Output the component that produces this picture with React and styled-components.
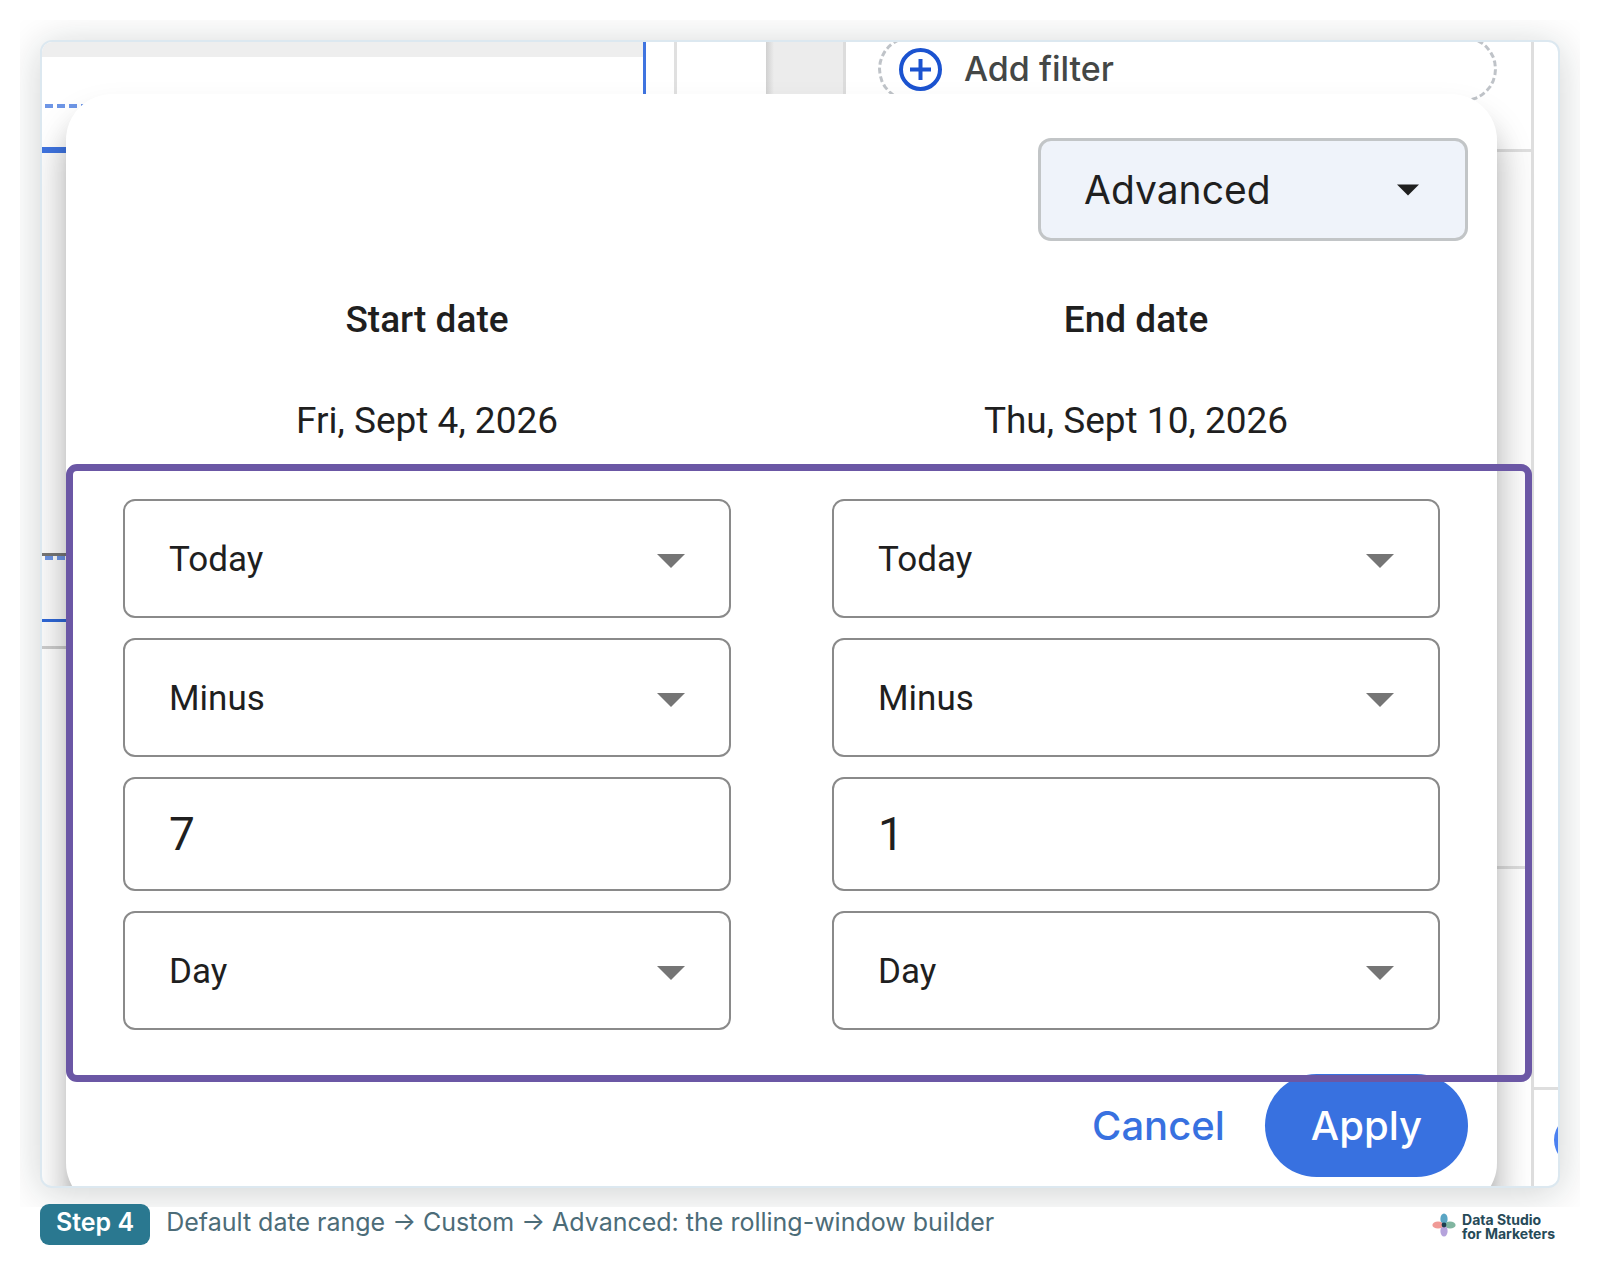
import React from 'react';
import styled, { createGlobalStyle, css } from 'styled-components';

const color = {
  ink: '#1f1f1f',
  blue: '#3871e0',
  line: '#dedede',
  field: '#8a8a8a',
  highlight: '#6b57a5',
  teal: '#2a7890',
  caption: '#4c6c78',
  brand: '#264a58',
};

const font = {
  ui: "Roboto, 'Liberation Sans', sans-serif",
  display: "Inter, Roboto, 'Liberation Sans', sans-serif",
};

const GlobalStyle = createGlobalStyle`
  *, *::before, *::after {
    box-sizing: border-box;
  }

  body {
    margin: 0;
    background: #fff;
    color: ${color.ink};
    font-family: ${font.ui};
  }

  button, input, select {
    font: inherit;
    color: inherit;
    margin: 0;
  }
`;

const Page = styled.main`
  padding: 20px 20px 16px;
`;

const Stage = styled.div`
  padding: 20px 20px 19px;
  overflow: hidden;
`;

const Card = styled.section`
  display: grid;
  border: 2px solid #dce8f0;
  border-radius: 12px;
  overflow: hidden;
  background: #fff;
  box-shadow: 0 5px 40px rgba(16, 32, 28, 0.2);

  > * {
    grid-area: 1 / 1;
    min-width: 0;
  }
`;

/* The report editor that shows around the dialog */

const Backdrop = styled.div`
  display: flex;
  overflow: hidden;
`;

const Canvas = styled.div`
  flex: 0 0 604px;
  border-right: 3px solid #3f74e0;
`;

const CanvasHeader = styled.div`
  height: 15px;
  background: #eee;
`;

const Block = styled.div`
  height: ${props => props.$height}px;
  ${props =>
    props.$rule &&
    css`
      border-bottom: ${props.$weight || 3}px solid ${props.$rule};
    `};
  ${props =>
    props.$muted &&
    css`
      background: #fcfcfc;
    `};
`;

const Dashes = styled.div`
  height: 4px;
  margin-left: 3px;
  background: repeating-linear-gradient(90deg, #6e96e6 0 8px, transparent 8px 12px);
`;

const Gutter = styled.div`
  flex: 0 0 31px;
  border-right: 3px solid #e0e0e0;
`;

const Blank = styled.div`
  flex: 0 0 89px;
`;

const Scrollbar = styled.div`
  flex: 0 0 80px;
  border-right: 3px solid #dcdcdc;
  background: linear-gradient(90deg, #d0d0d0, #ececec 8px);
`;

const Properties = styled.div`
  flex: 1;
  border-right: 3px solid ${color.line};
`;

const FilterSlot = styled.div`
  height: 116px;
  padding: 0 34px 0 32px;
  border-bottom: 3px solid ${color.line};
`;

const AddFilter = styled.button`
  display: flex;
  align-items: center;
  gap: 22px;
  width: 100%;
  height: 66px;
  margin-top: -6px;
  padding: 0 18px;
  border: 3px dashed #bfc3c8;
  border-radius: 33px;
  background: none;
  color: #444746;
  font-family: ${font.display};
  font-size: 34px;
  font-weight: 500;
  line-height: 40px;

  svg {
    width: 43px;
    height: 43px;
  }
`;

const DataPanel = styled.div`
  flex: 0 0 24px;
  overflow: hidden;
`;

const Bubble = styled.div`
  width: 52px;
  height: 52px;
  margin: 24px 0 0 20px;
  border-radius: 50%;
  background: #4a80f0;
`;

/* Dialog */

const Dialog = styled.form`
  display: flex;
  flex-direction: column;
  margin: 52px 61px -23px 24px;
  padding: 44px 29px 32px;
  border-radius: 46px;
  background: #fff;
  box-shadow: 0 20px 14px -8px rgba(0, 0, 0, 0.16), 0 28px 28px 3px rgba(0, 0, 0, 0.14),
    0 26px 36px 6px rgba(0, 0, 0, 0.12);
`;

const Picker = styled.label`
  display: grid;
  align-items: center;

  > * {
    grid-area: 1 / 1;
  }

  svg {
    justify-self: end;
    pointer-events: none;
  }
`;

const ModePicker = styled(Picker)`
  align-self: flex-end;
  width: 430px;

  svg {
    width: 22px;
    height: 12px;
    margin-right: 49px;
    fill: ${color.ink};
  }
`;

const ModeSelect = styled.select`
  appearance: none;
  width: 100%;
  height: 103px;
  padding: 0 44px 0 43px;
  border: 3px solid #c2c5c7;
  border-radius: 13px;
  background: #eff3fa;
  font-family: ${font.display};
  font-size: 39px;
`;

const Columns = styled.div`
  display: grid;
  grid-template-columns: 1fr 1fr;
  gap: 101px;
  padding: 0 28px;
`;

const Column = styled.section`
  display: flex;
  flex-direction: column;
  gap: 20px;
`;

const Heading = styled.h2`
  margin: 55px 0 0;
  font-size: 37px;
  font-weight: 500;
  line-height: 48px;
  text-align: center;
`;

const Resolved = styled.p`
  margin: 53px 0 19px;
  font-size: 37px;
  line-height: 48px;
  text-align: center;
`;

const FieldPicker = styled(Picker)`
  svg {
    width: 28px;
    height: 14px;
    margin: 4px 46px 0 0;
    fill: #757575;
  }
`;

const fieldStyles = css`
  appearance: none;
  width: 100%;
  padding: 0 44px;
  border: 2px solid ${color.field};
  border-radius: 12px;
  background: #fff;
`;

const FieldSelect = styled.select`
  ${fieldStyles};
  height: 119px;
  padding-top: 2px;
  font-size: 35px;
`;

const FieldNumber = styled.input`
  ${fieldStyles};
  appearance: textfield;
  height: 114px;
  font-size: 46px;

  &::-webkit-inner-spin-button {
    display: none;
  }
`;

/* Marks the rows that the step is about */
const Highlight = styled.div`
  position: absolute;
  top: 0;
  right: -35px;
  bottom: 0;
  left: 0;
  border: 7px solid ${color.highlight};
  border-radius: 11px;
  pointer-events: none;
`;

const Fields = styled.div`
  position: relative;
  margin: 0 -29px;
  padding: 35px 29px 52px;
`;

const Actions = styled.div`
  display: flex;
  justify-content: flex-end;
  margin-top: -8px;
  font-family: ${font.display};
`;

const Button = styled.button`
  height: 103px;
  padding: 0 ${props => (props.$primary ? 46 : 40)}px;
  border: none;
  border-radius: 52px;
  background: ${props => (props.$primary ? color.blue : 'transparent')};
  color: ${props => (props.$primary ? '#fff' : color.blue)};
  font-size: 40px;
  font-weight: 500;
`;

/* Caption */

const Caption = styled.footer`
  display: flex;
  align-items: center;
  gap: 16px;
  margin-top: -3px;
  padding: 0 25px 0 20px;
  position: relative;
  font-family: ${font.display};
`;

const Step = styled.strong`
  padding: 0 16px 4px;
  border-radius: 9px;
  background: ${color.teal};
  color: #fff;
  font-size: 25px;
  font-weight: 600;
  line-height: 37px;
`;

const CaptionText = styled.p`
  flex: 1;
  margin: 0;
  padding-bottom: 4px;
  color: ${color.caption};
  font-size: 25px;
  line-height: 37px;
`;

const Brand = styled.div`
  display: flex;
  align-items: center;
  gap: 6px;
  color: ${color.brand};
  font-size: 14px;
  font-weight: 700;
  line-height: 14px;

  svg {
    width: 24px;
    height: 24px;
  }

  span {
    padding-top: 4px;
  }
`;

const Arrow = () => (
  <svg viewBox="0 0 28 14" aria-hidden="true">
    <path d="M0 0h28L14 14z" />
  </svg>
);

const columns = [
  { title: 'Start date', resolved: 'Fri, Sept 4, 2026', amount: 7 },
  { title: 'End date', resolved: 'Thu, Sept 10, 2026', amount: 1 },
];

function Choice({ label, options }) {
  return (
    <FieldPicker>
      <FieldSelect aria-label={label}>
        {options.map(option => (
          <option key={option}>{option}</option>
        ))}
      </FieldSelect>
      <Arrow />
    </FieldPicker>
  );
}

function Editor() {
  return (
    <Backdrop>
      <Canvas>
        <CanvasHeader />
        <Block $height={47} />
        <Dashes />
        <Block $height={45} $rule="#3f74e0" $weight={6} />
        <Block $height={403} $rule="#777" $muted />
        <Dashes />
        <Block $height={62} $rule="#2f68d8" $muted />
        <Block $height={27} $rule="#cdcdcd" $muted />
      </Canvas>
      <Gutter />
      <Blank />
      <Scrollbar />
      <Properties>
        <FilterSlot>
          <AddFilter type="button">
            <svg viewBox="0 0 43 43" fill="none" stroke="#1b53d0" strokeWidth="4" aria-hidden="true">
              <circle cx="21.5" cy="21.5" r="19.5" />
              <path d="M21.5 11v21M11 21.5h21" />
            </svg>
            Add filter
          </AddFilter>
        </FilterSlot>
        <Block $height={717} $rule={color.line} $muted />
      </Properties>
      <DataPanel>
        <Block $height={1048} $rule={color.line} />
        <Bubble />
      </DataPanel>
    </Backdrop>
  );
}

function DateRangeDialog() {
  return (
    <Dialog onSubmit={event => event.preventDefault()}>
      <ModePicker>
        <ModeSelect aria-label="Date range type">
          <option>Advanced</option>
          <option>Fixed</option>
        </ModeSelect>
        <Arrow />
      </ModePicker>
      <Columns>
        {columns.map(({ title, resolved }) => (
          <div key={title}>
            <Heading>{title}</Heading>
            <Resolved>{resolved}</Resolved>
          </div>
        ))}
      </Columns>
      <Fields>
        <Columns>
          {columns.map(({ title, amount }) => (
            <Column key={title}>
              <Choice label={`${title} anchor`} options={['Today', 'Fixed']} />
              <Choice label={`${title} direction`} options={['Minus', 'Plus']} />
              <FieldNumber type="number" aria-label={`${title} amount`} defaultValue={amount} />
              <Choice label={`${title} unit`} options={['Day', 'Week', 'Month']} />
            </Column>
          ))}
        </Columns>
        <Highlight />
      </Fields>
      <Actions>
        <Button type="button">Cancel</Button>
        <Button type="submit" $primary>
          Apply
        </Button>
      </Actions>
    </Dialog>
  );
}

export default function App() {
  return (
    <>
      <GlobalStyle />
      <Page>
        <Stage>
          <Card>
            <Editor />
            <DateRangeDialog />
          </Card>
        </Stage>
        <Caption>
          <Step>Step 4</Step>
          <CaptionText>Default date range → Custom → Advanced: the rolling-window builder</CaptionText>
          <Brand>
            <svg viewBox="0 0 24 24" aria-hidden="true">
              <ellipse cx="12" cy="6" rx="3.6" ry="5.6" fill="#5aa5c4" />
              <ellipse cx="18" cy="12" rx="5.6" ry="3.6" fill="#80b5a0" />
              <ellipse cx="12" cy="18" rx="3.6" ry="5.6" fill="#b5a3dc" />
              <ellipse cx="6" cy="12" rx="5.6" ry="3.6" fill="#f09a96" />
              <circle cx="12" cy="12" r="2.4" fill="#1d3f50" />
            </svg>
            <span>
              Data Studio
              <br />
              for Marketers
            </span>
          </Brand>
        </Caption>
      </Page>
    </>
  );
}
